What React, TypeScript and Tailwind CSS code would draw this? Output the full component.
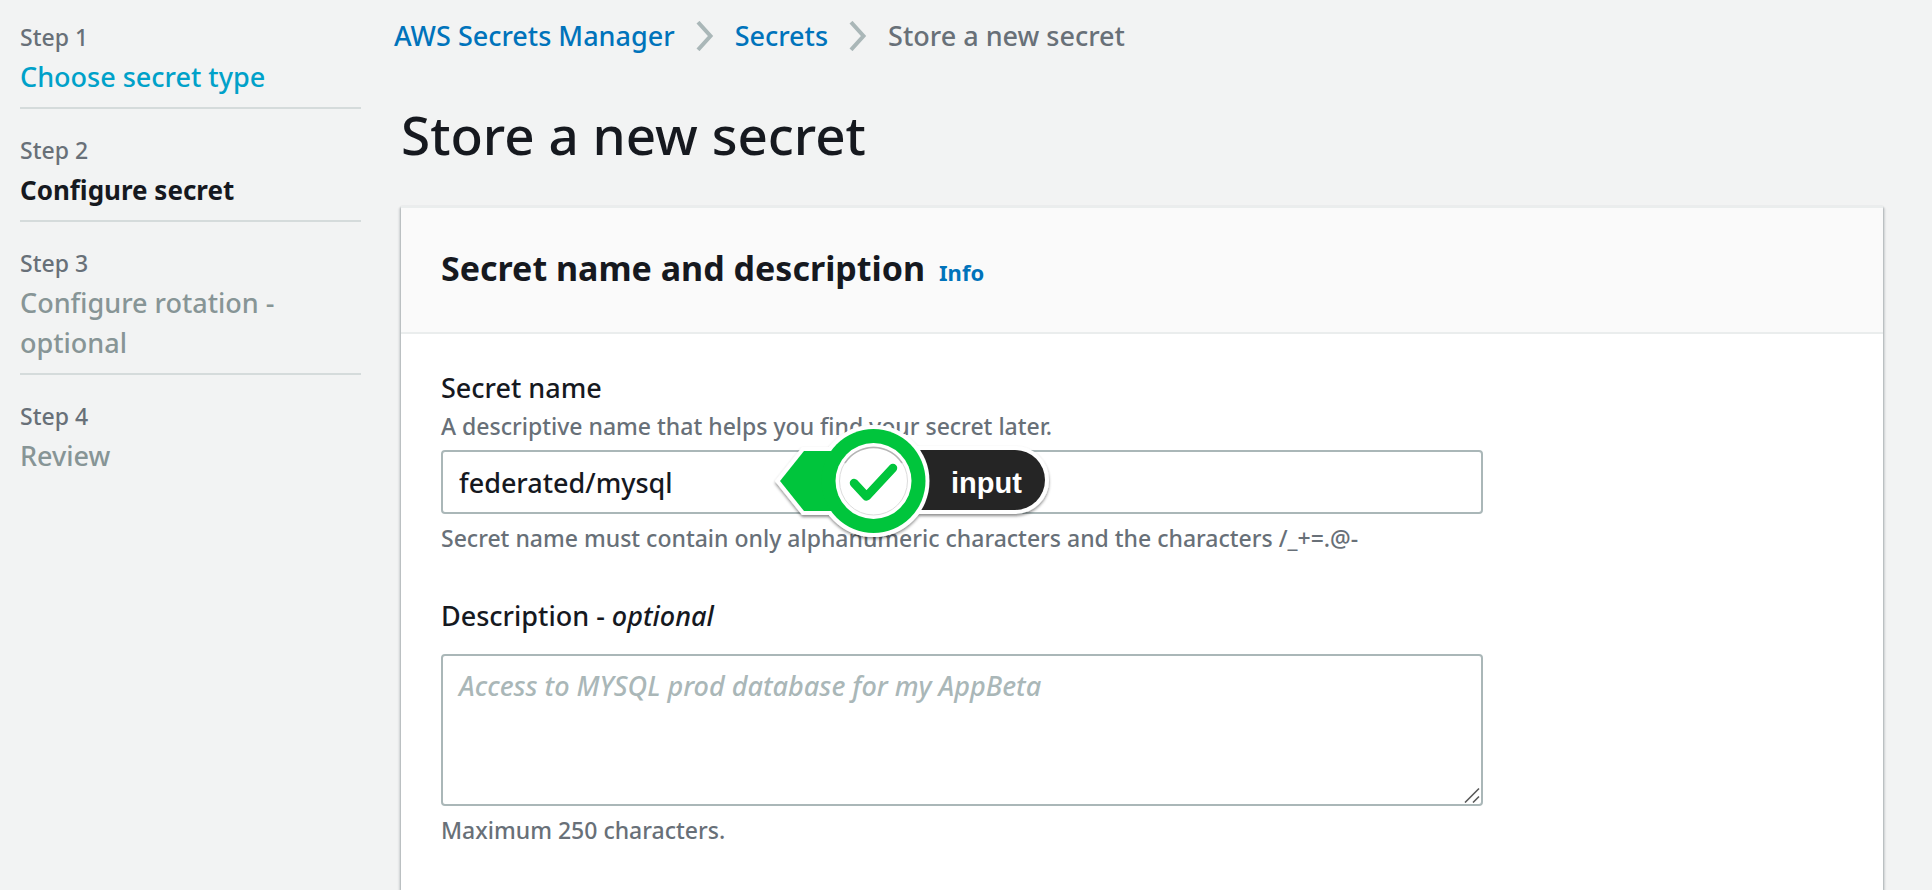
import type { ReactNode } from "react";

type StepState = "visited" | "current" | "upcoming";

const steps: { name: string; state: StepState }[] = [
  { name: "Choose secret type", state: "visited" },
  { name: "Configure secret", state: "current" },
  { name: "Configure rotation - optional", state: "upcoming" },
  { name: "Review", state: "upcoming" },
];

const stepStyles: Record<StepState, string> = {
  visited: "text-[27px] text-[#00a1c9]",
  current: "text-[26px] font-bold text-[#16191f]",
  upcoming: "text-[27px] text-[#879596]",
};

function WizardSteps() {
  return (
    <nav aria-label="Steps" className="w-[361px] shrink-0 pl-5 pt-[18px]">
      <ol className="flex flex-col gap-[22px]">
        {steps.map((step, index) => (
          <li
            key={step.name}
            className="border-b-2 border-[#d5dbdb] pb-[10px] last:border-b-0"
            aria-current={step.state === "current" ? "step" : undefined}
          >
            <div className="text-[23px] leading-[39px] text-[#687078]">Step {index + 1}</div>
            <div className={`pr-16 leading-10 ${stepStyles[step.state]}`}>
              {step.state === "visited" ? <a href="#choose">{step.name}</a> : step.name}
            </div>
          </li>
        ))}
      </ol>
    </nav>
  );
}

function Separator() {
  return (
    <svg viewBox="0 0 18 30" className="h-[30px] w-[18px]" fill="none" stroke="#aab7b8" strokeWidth="4" aria-hidden="true">
      <path d="M2 1.2 L14.5 15 L2 28.8" />
    </svg>
  );
}

function Breadcrumbs() {
  return (
    <nav aria-label="Breadcrumbs" className="flex items-center gap-[21px] text-[27px] leading-10">
      <a href="#home" className="text-[#0073bb]">AWS Secrets Manager</a>
      <Separator />
      <a href="#secrets" className="text-[#0073bb]">Secrets</a>
      <Separator />
      <span className="text-[#687078]">Store a new secret</span>
    </nav>
  );
}

function Hint({ id, children }: { id: string; children: ReactNode }) {
  return (
    <p id={id} className="text-[23px] leading-9 text-[#687078]">
      {children}
    </p>
  );
}

function InputMarker() {
  return (
    <div className="pointer-events-none absolute -top-6 left-[328px] h-28 w-[288px]">
      <svg viewBox="0 0 288 112" className="h-full w-full overflow-visible" aria-hidden="true">
        <defs>
          <filter id="marker-shadow" x="-10%" y="-10%" width="120%" height="130%">
            <feDropShadow dx="0" dy="2" stdDeviation="1.5" floodColor="#000" floodOpacity="0.45" />
          </filter>
        </defs>
        <g filter="url(#marker-shadow)">
          <g stroke="#fff" strokeWidth="8" fill="#fff">
            <path d="M104 24 H246 A30 30 0 0 1 246 84 H104 Z" />
            <path d="M11 55 L35 25 H104 V85 H35 Z" />
            <circle cx="104.500" cy="55" r="52" />
          </g>
        </g>
        <path d="M104 24 H246 A30 30 0 0 1 246 84 H104 Z" fill="#252525" />
        <circle cx="104.500" cy="55" r="56" fill="#fff" />
        <path d="M11 55 L35 25 H104 V85 H35 Z" fill="#00c53c" />
        <circle cx="104.500" cy="55" r="52" fill="#00c53c" />
        <circle cx="104.500" cy="55" r="38" fill="#fff" />
        <circle cx="104.500" cy="55" r="34" fill="none" stroke="#dcdcdc" strokeWidth="1" />
        <path d="M76 37 A34 34 0 0 1 133 37" fill="none" stroke="#b4b4b4" strokeWidth="1.500" />
        <path d="M85 57 L97.500 70.500 L124 42" fill="none" stroke="#00c53c" strokeWidth="8.500" strokeLinecap="round" strokeLinejoin="round" />
      </svg>
      <span className="absolute left-[182px] top-[37px] text-[29px] font-bold leading-10 text-white [font-family:'Liberation_Sans',Arial,sans-serif]">
        input
      </span>
    </div>
  );
}

export default function App() {
  return (
    <div className="flex min-h-screen bg-[#f2f3f3] font-medium text-[#16191f] [font-family:'Noto_Sans','Open_Sans',sans-serif]">
      <WizardSteps />
      <main className="flex min-w-0 flex-1 flex-col pl-[33px] pr-[49px] pt-4">
        <Breadcrumbs />
        <div className="ml-[7px] flex flex-1 flex-col">
          <h1 className="mt-[47px] text-[53px] leading-[64px]">Store a new secret</h1>
          <section className="mt-[39px] flex-1 border-t-2 border-[#eaeded] bg-white shadow-[0_1px_2px_rgba(0,28,36,0.4),2px_2px_2px_rgba(0,28,36,0.12),-2px_2px_2px_rgba(0,28,36,0.12)]">
            <header className="flex items-baseline gap-[14px] border-b-2 border-[#eaeded] bg-[#fafafa] px-10 pb-10 pt-10">
              <h2 className="text-[34px] font-bold leading-10">Secret name and description</h2>
              <a href="#info" className="text-[22px] font-bold leading-10 text-[#0073bb]">Info</a>
            </header>
            <form className="flex flex-col gap-10 px-10 pb-10 pt-[34px]">
              <div className="flex max-w-[1042px] flex-col">
                <label htmlFor="secret-name" className="text-[27px] leading-10">Secret name</label>
                <Hint id="secret-name-hint">A descriptive name that helps you find your secret later.</Hint>
                <div className="relative my-[6px]">
                  <input
                    id="secret-name"
                    type="text"
                    defaultValue="federated/mysql"
                    aria-describedby="secret-name-hint secret-name-rule"
                    className="block h-16 w-full rounded-[4px] border-2 border-[#aab7b8] bg-white px-4 text-[27px] outline-none"
                  />
                  <InputMarker />
                </div>
                <Hint id="secret-name-rule">
                  Secret name must contain only alphanumeric characters and the characters /_+=.@-
                </Hint>
              </div>
              <div className="flex max-w-[1042px] flex-col">
                <label htmlFor="description" className="text-[27px] leading-10">
                  Description - <em>optional</em>
                </label>
                <div className="relative mb-[6px] mt-[18px]">
                  <textarea
                    id="description"
                    placeholder="Access to MYSQL prod database for my AppBeta"
                    aria-describedby="description-rule"
                    className="block h-[152px] w-full resize-none rounded-[4px] border-2 border-[#aab7b8] bg-white px-4 py-[10px] text-[27px] leading-10 outline-none placeholder:italic placeholder:text-[#aab7b8]"
                  />
                  <svg
                    viewBox="0 0 16 16"
                    className="pointer-events-none absolute bottom-[3px] right-[3px] h-4 w-4"
                    stroke="#5a5a5a"
                    strokeWidth="1.600"
                    aria-hidden="true"
                  >
                    <path d="M1 15.500 L15 1.500 M9 15.500 L15 9.500" />
                  </svg>
                </div>
                <Hint id="description-rule">Maximum 250 characters.</Hint>
              </div>
            </form>
          </section>
        </div>
      </main>
    </div>
  );
}
